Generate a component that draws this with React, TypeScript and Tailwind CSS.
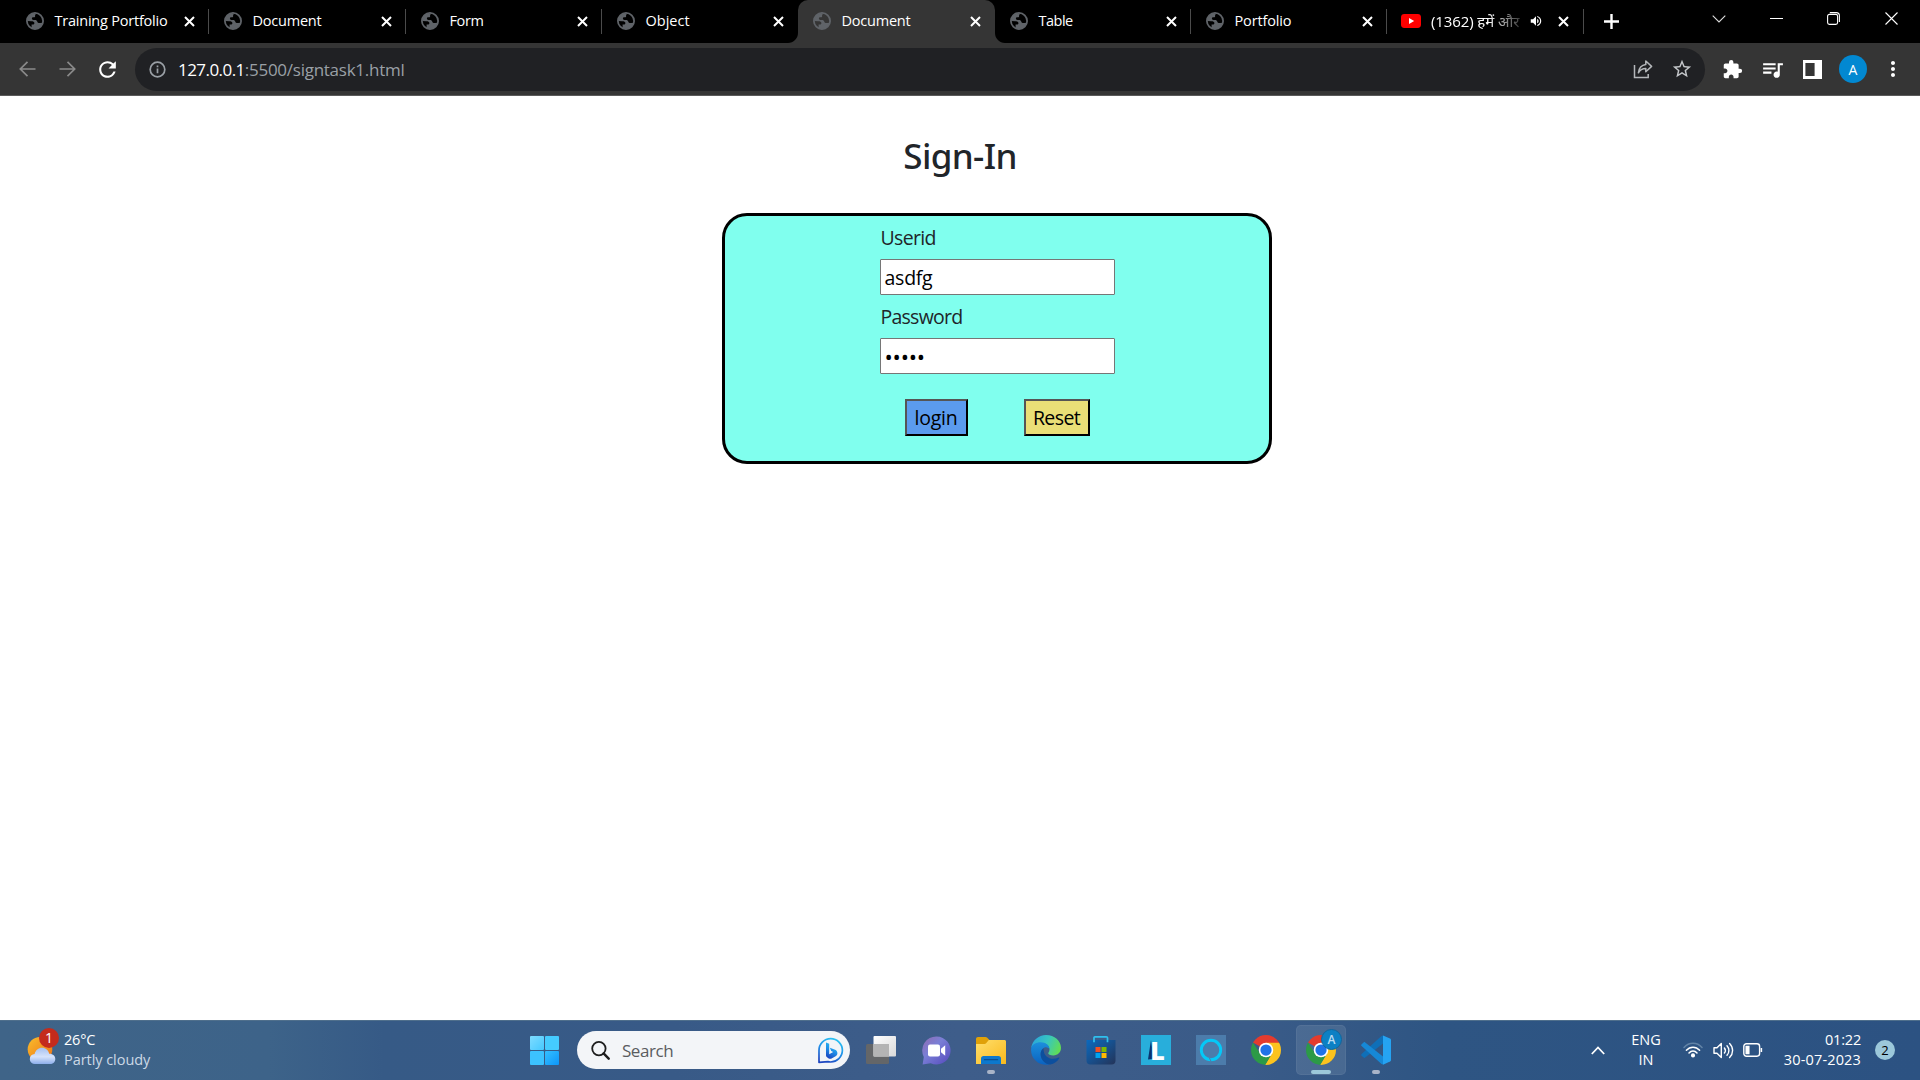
import type { ReactNode } from 'react';
import { MdExtension, MdQueueMusic, MdStarBorder, MdMoreVert, MdRefresh, MdVolumeUp } from 'react-icons/md';

type Tab = { title: string; tracking: string; width: string; active?: boolean; divider?: boolean };

const tabs: Tab[] = [
  { title: 'Training Portfolio', tracking: 'tracking-[-0.22px]', width: 'w-[198px]', divider: true },
  { title: 'Document', tracking: 'tracking-[-0.22px]', width: 'w-[197px]', divider: true },
  { title: 'Form', tracking: 'tracking-[-0.4px]', width: 'w-[196px]', divider: true },
  { title: 'Object', tracking: 'tracking-normal', width: 'w-[196px]' },
  { title: 'Document', tracking: 'tracking-[-0.22px]', width: 'w-[197px]', active: true },
  { title: 'Table', tracking: 'tracking-[-0.5px]', width: 'w-[196px]', divider: true },
  { title: 'Portfolio', tracking: 'tracking-[-0.15px]', width: 'w-[196px]', divider: true },
];

function Globe() {
  return (
    <svg className="size-[18px] shrink-0" viewBox="0 0 18 18">
      <circle cx="9" cy="9" r="8.1" fill="none" stroke="#5f6368" strokeWidth="1.8" />
      <path
        fill="#5f6368"
        d="M9.8 1.2C5 .9 1.2 4.4 1.2 9l4.2.2c1.700 0 2.900.5 3 1.800.1.900-.5 1.500-1.500 1.500H5.600v3.800c1 .5 2.200.7 3.400.7 3.900 0 7-2.600 7.800-6.200l-2.600.2c-1.700.2-2.600-.3-3-1.600-.3-1-1-1.500-2.200-1.500H7.400c-.9 0-1.500-.5-1.500-1.300s.6-1.300 1.500-1.300h.7c.7 0 1-.4 1-1V3.300c0-.6.2-.9.700-1.100z"
      />
    </svg>
  );
}

function Close() {
  return (
    <svg className="size-[11px] shrink-0" viewBox="0 0 11 11">
      <path d="M1 1l9 9M10 1l-9 9" stroke="#fff" strokeWidth="2" />
    </svg>
  );
}

function ActiveCurve({ flip }: { flip?: boolean }) {
  return (
    <svg className={flip ? 'absolute bottom-0 -right-[10px] size-[10px] -scale-x-100' : 'absolute bottom-0 -left-[10px] size-[10px]'} viewBox="0 0 10 10">
      <path d="M10 0v10H0C5.5 10 10 5.5 10 0z" fill="#353535" />
    </svg>
  );
}

function TabStrip() {
  return (
    <div className="flex h-[43px] bg-black pl-[11px] text-[14.5px] leading-5 text-white">
      {tabs.map((t, i) => (
        <div
          key={i}
          className={`relative flex h-full shrink-0 items-center pb-px pl-[15px] pr-[14.5px] ${t.width} ${t.active ? 'rounded-t-[10px] bg-[#353535]' : ''}`}
        >
          {t.active && <ActiveCurve />}
          {t.active && <ActiveCurve flip />}
          <Globe />
          <span className={`ml-[10.5px] flex-1 whitespace-nowrap ${t.tracking}`}>{t.title}</span>
          <Close />
          {t.divider && <i className="absolute right-0 top-[9px] h-[25px] w-px bg-[#4b4b4b]" />}
        </div>
      ))}
      <div className="relative flex w-[197px] shrink-0 items-center pb-px pl-[14px] pr-[15px]">
        <svg className="h-[14px] w-[20px] shrink-0" viewBox="0 0 20 14">
          <rect width="20" height="14" rx="3.4" fill="#f00" />
          <path d="M8 4l5.2 3L8 10z" fill="#fff" />
        </svg>
        <span className="-mt-px ml-[10px] w-[91px] whitespace-nowrap text-[15px] tracking-[-0.1px] [mask-image:linear-gradient(90deg,#000_62%,transparent_108%)]">
          (1362) हमें और
        </span>
        <MdVolumeUp className="ml-[7px] size-[14px]" />
        <span className="flex-1" />
        <Close />
        <i className="absolute right-0 top-[9px] h-[25px] w-px bg-[#4b4b4b]" />
      </div>
      <svg className="ml-[20px] mt-[14px] size-[15px] shrink-0" viewBox="0 0 15 15">
        <path d="M7.5 0v15M0 7.5h15" stroke="#fff" strokeWidth="2.4" />
      </svg>
      <div className="ml-auto flex h-[37px] items-center pr-[22px]">
        <svg className="mr-[44px] h-[8px] w-[14px]" viewBox="0 0 14 8">
          <path d="M.7.7L7 7 13.3.7" fill="none" stroke="#ddd" strokeWidth="1.1" />
        </svg>
        <i className="mr-[44px] h-px w-[13px] bg-white" />
        <svg className="mr-[45px] size-[13px]" viewBox="0 0 13 13" fill="none" stroke="#fff" strokeWidth="1.1">
          <rect x=".6" y="2.4" width="10" height="10" rx="1.8" />
          <path d="M2.8.6h6.4c1.8 0 3.2 1.4 3.2 3.2V10" />
        </svg>
        <svg className="size-[13px]" viewBox="0 0 13 13">
          <path d="M.5.5l12 12M12.500.5l-12 12" stroke="#fff" strokeWidth="1.1" />
        </svg>
      </div>
    </div>
  );
}

function Toolbar() {
  return (
    <div className="flex h-[53px] items-center border-b border-[#5a5a5a] bg-[#353535] pl-[19px] pr-[15.5px]">
      <svg className="h-[16px] w-[17px]" viewBox="0 0 17 16" fill="none" stroke="#8a8a8a" strokeWidth="1.7">
        <path d="M16.5 8H1.500M8.500.8L1.300 8l7.200 7.200" />
      </svg>
      <svg className="ml-[23px] h-[16px] w-[17px]" viewBox="0 0 17 16" fill="none" stroke="#8a8a8a" strokeWidth="1.7">
        <path d="M.5 8h15M8.500.8L15.700 8l-7.200 7.200" />
      </svg>
      <MdRefresh className="ml-[19px] size-[25px] text-white" />
      <div className="ml-[15px] flex h-[43px] w-[1570px] items-center rounded-full bg-[#202124] pl-[14px] pr-[12px]">
        <svg className="size-[17px]" viewBox="0 0 17 17" fill="none" stroke="#9aa0a6" strokeWidth="1.7">
          <circle cx="8.5" cy="8.5" r="7.3" />
          <path d="M8.500 7.600v4.600M8.500 4.500v1.800" />
        </svg>
        <span className="ml-[12px] pt-px text-[17px] leading-6 tracking-[-0.55px] text-white">127.0.0.1</span>
        <span className="pt-px text-[17px] leading-6 tracking-[-0.26px] text-[#9aa0a6]">:5500/signtask1.html</span>
        <svg className="ml-auto h-[20px] w-[20px]" viewBox="0 0 20 20" fill="none" stroke="#b4b7ba" strokeWidth="1.5">
          <path d="M1.500 6v12.500h13.700V15" />
          <path d="M12.800 2l5.800 5.400-5.800 5.300V9.600c-3.600 0-5.900 1.300-7.400 4.200.5-4.400 3-7.700 7.400-8.300V2z" strokeLinejoin="round" />
        </svg>
        <MdStarBorder className="ml-[18px] size-[22px] text-[#c4c7ca]" />
      </div>
      <MdExtension className="ml-[17px] size-[21px] text-white" />
      <MdQueueMusic className="ml-[17px] size-[25px] text-white" />
      <svg className="ml-[18px] h-[19px] w-[19px]" viewBox="0 0 19 19">
        <path fillRule="evenodd" fill="#fff" d="M0 0h19v19H0zM2.400 3v13h9.200V3z" />
      </svg>
      <span className="ml-[17px] flex size-[28px] items-center justify-center rounded-full bg-[#0288d1] text-[14px] text-white">A</span>
      <MdMoreVert className="ml-auto size-[24px] text-white" />
    </div>
  );
}

function SignIn() {
  return (
    <main className="flex h-[924px] flex-col items-center bg-white pt-[39px] text-[#212529]">
      <h1 className="font-['Noto_Sans'] text-[35px] font-medium leading-[42px] tracking-[-0.65px]">Sign-In</h1>
      <form className="ml-[74px] mt-[36px] flex h-[251px] w-[550px] flex-col items-center rounded-[25px] border-[3px] border-black bg-[#80ffee] pt-[7px] text-[19.5px] leading-[30px]">
        <div className="w-[235px]">
          <p className="pl-px tracking-[-0.65px]">Userid</p>
          <div className="mt-[6px] h-9 rounded-[1px] border border-[#767676] bg-white pl-[4px] leading-[36px] tracking-[-0.25px] text-black">asdfg</div>
          <p className="mt-[7px] pl-px tracking-[-0.75px]">Password</p>
          <div className="mt-[6px] h-9 rounded-[1px] border border-[#767676] bg-white pl-[4px] text-[22px] leading-[35px] tracking-[-0.2px] text-black">•••••</div>
          <div className="mt-[25px] flex pl-[25px] leading-[34px] text-black">
            <div className="h-[37px] w-[63px] border-2 border-b-black border-l-[#555] border-r-black border-t-[#555] bg-[#5b9bee] text-center tracking-[-0.2px]">login</div>
            <div className="ml-[56px] h-[37px] w-[66px] border-2 border-b-black border-l-[#555] border-r-black border-t-[#555] bg-[#eadf77] text-center tracking-[-0.6px]">Reset</div>
          </div>
        </div>
      </form>
    </main>
  );
}

function Chrome({ id }: { id: string }) {
  return (
    <svg className="size-[30px]" viewBox="0 0 48 48">
      <defs>
        <clipPath id={id}><circle cx="24" cy="24" r="24" /></clipPath>
      </defs>
      <g clipPath={`url(#${id})`}>
        <path d="M24 24L3.200 12V0H48v13H24z" fill="#e33b2e" />
        <path d="M24 12.500h24V48H22.500L33.500 29.500z" fill="#fcc31e" />
        <path d="M3.200 12L0 8v40h22.500l11-18.500L24 24 14.500 29.500z" fill="#2c9a47" />
      </g>
      <circle cx="24" cy="24" r="11.600" fill="#fff" />
      <circle cx="24" cy="24" r="9" fill="#1f73e8" />
    </svg>
  );
}

function Slot({ children, mark, active }: { children: ReactNode; mark?: boolean; active?: boolean }) {
  return (
    <div className={`relative mx-[2.5px] flex size-[50px] items-center justify-center rounded-[5px] ${active ? 'bg-white/10 ring-1 ring-inset ring-white/5' : ''}`}>
      {children}
      {mark && <i className="absolute bottom-[1px] left-[21px] h-[4px] w-[8px] rounded-full bg-[#a9b4c8]" />}
      {active && <i className="absolute bottom-[1px] left-[15px] h-[4px] w-[20px] rounded-full bg-[#9cc8da]" />}
    </div>
  );
}

function Taskbar() {
  return (
    <footer className="flex h-[60px] items-center border-t border-[#4f6f8c] bg-[linear-gradient(90deg,#3f6488_0%,#3d6389_14%,#365a86_20%,#385a87_35%,#3e5d8a_50%,#3a5b88_65%,#2e5583_75%,#2c5282_100%)] pb-px text-[14.5px] leading-5 text-white">
      <div className="flex w-[530px] items-center pl-[27px]">
        <div className="relative">
          <svg className="h-[29px] w-[29px]" viewBox="0 0 29 29">
            <defs>
              <linearGradient id="sun" x1="0" y1="0" x2="1" y2="1"><stop stopColor="#f9bd2c" /><stop offset="1" stopColor="#ee7014" /></linearGradient>
              <linearGradient id="cloud" x1="0" y1="0" x2="0" y2="1"><stop stopColor="#a6c1f0" /><stop offset=".55" stopColor="#d6e3fb" /><stop offset="1" stopColor="#8daeea" /></linearGradient>
            </defs>
            <circle cx="13" cy="13.3" r="12.3" fill="url(#sun)" />
            <path d="M8 28a5 5 0 0 1-.4-10c1-3.800 3.800-6.200 7.400-6.200 3.600 0 6.400 2.400 7.200 5.900C26 17.600 28.300 20 28.300 22.900 28.300 25.800 26 28 23 28z" fill="url(#cloud)" />
          </svg>
          <span className="absolute -top-[8px] left-[12px] flex size-[20px] items-center justify-center rounded-full bg-[#c42b1c] text-[14px]">1</span>
        </div>
        <div className="-mt-px ml-[8px]">
          <div className="tracking-[-0.2px]">26°C</div>
          <div className="tracking-[-0.05px] text-[#ccd9e6]">Partly cloudy</div>
        </div>
      </div>
      <svg className="size-[29px]" viewBox="0 0 29 29">
        <defs>
          <linearGradient id="win" x1="0" y1="0" x2="1" y2="1"><stop stopColor="#7fdcff" /><stop offset="1" stopColor="#45c8ff" /></linearGradient>
          <linearGradient id="win2" x1="0" y1="0" x2="1" y2="1"><stop stopColor="#35bfff" /><stop offset="1" stopColor="#0c96fa" /></linearGradient>
        </defs>
        <rect width="14" height="14" rx="1" fill="url(#win)" />
        <rect x="15" width="14" height="14" rx="1" fill="#45cbff" />
        <rect y="15" width="14" height="14" rx="1" fill="#3cc2ff" />
        <rect x="15" y="15" width="14" height="14" rx="1" fill="url(#win2)" />
      </svg>
      <div className="ml-[18px] flex h-[38px] w-[273px] items-center rounded-full bg-[#f3f5f8] pl-[14px] pr-[6px]">
        <svg className="size-[19px]" viewBox="0 0 19 19" fill="none" stroke="#1d1d1d" strokeWidth="1.8">
          <circle cx="7.900" cy="7.600" r="6.700" />
          <path d="M12.600 12.400l5.100 5.300" strokeWidth="2.400" strokeLinecap="round" />
        </svg>
        <span className="ml-[12px] pt-px text-[17px] tracking-[-0.45px] text-[#5a5c60]">Search</span>
        <svg className="ml-auto size-[27px]" viewBox="0 0 27 27">
          <defs>
            <linearGradient id="bing" x1=".7" y1="0" x2=".3" y2="1"><stop stopColor="#2bc3f2" /><stop offset=".5" stopColor="#1f8fe8" /><stop offset="1" stopColor="#1c45c0" /></linearGradient>
          </defs>
          <path d="M2 25.400V13.500A11.700 11.700 0 1 1 13.500 25l-2.500-.3z" fill="none" stroke="url(#bing)" strokeWidth="1.700" strokeLinejoin="round" />
          <path d="M9 5.500l3.200 1.300v10.500l4-2.200-2-1-1.300-3.400 5.200 2c1.600.6 2.300 2 2.300 3.500 0 1.300-.7 2.300-1.800 3l-4 2.200c-.9.500-2 .500-2.900 0L10 20.300c-.6-.4-1-1-1-1.800z" fill="url(#bing)" />
        </svg>
      </div>
      <div className="ml-[3.5px] flex items-center">
        <Slot>
          <svg className="h-[28px] w-[30px]" viewBox="0 0 30 28">
            <defs><linearGradient id="tv" x1="0" y1="0" x2="1" y2="1"><stop stopColor="#fff" /><stop offset="1" stopColor="#d9d9d9" /></linearGradient></defs>
            <rect y="8" width="23" height="20" rx="1.500" fill="#646668" />
            <rect x="7.500" y="0" width="22.500" height="20.500" rx="1" fill="url(#tv)" />
            <path d="M7.500 8H23v12.500H7.500z" fill="#b4b4b4" />
          </svg>
        </Slot>
        <Slot>
          <svg className="size-[29px]" viewBox="0 0 29 29">
            <defs><linearGradient id="chat" x1="0" y1="0" x2="1" y2="1"><stop stopColor="#8f6bb0" /><stop offset=".4" stopColor="#7a7fd6" /><stop offset="1" stopColor="#5448bd" /></linearGradient></defs>
            <path d="M14.700.500a14 14 0 1 1-6 26.700L.600 28.500l1.200-7.500A14 14 0 0 1 14.700.500z" fill="url(#chat)" />
            <rect x="6" y="8.500" width="12" height="12" rx="2" fill="#fff" />
            <path d="M19 12.800l4.200-3.600v10.600L19 16.200z" fill="#fff" />
          </svg>
        </Slot>
        <Slot mark>
          <svg className="h-[27px] w-[30px]" viewBox="0 0 30 27">
            <defs><linearGradient id="fold" x1="0" y1="0" x2="1" y2="1"><stop stopColor="#ffdf6c" /><stop offset="1" stopColor="#f9b91d" /></linearGradient></defs>
            <path d="M0 2C0 .9.900 0 2 0h7.500c.6 0 1.100.200 1.500.600L13.500 3H28v8H0z" fill="#e0a108" />
            <path d="M0 7h8.500c.6 0 1-.2 1.400-.5L12.800 3H28.500c.8 0 1.500.700 1.500 1.500V27H0z" fill="url(#fold)" />
            <path d="M5 27v-5.500C5 20 6 19 7.500 19h15c1.500 0 2.500 1 2.500 2.500V27z" fill="#0d78cd" />
            <path d="M8.500 22.700h13" stroke="#0a4f93" strokeWidth="1.300" strokeLinecap="round" />
          </svg>
        </Slot>
        <Slot>
          <svg className="size-[30px]" viewBox="0 0 30 30">
            <defs>
              <linearGradient id="eTop" x1="0" y1=".3" x2="1" y2=".6"><stop stopColor="#2aa4dc" /><stop offset=".5" stopColor="#37c6c0" /><stop offset="1" stopColor="#62dd52" /></linearGradient>
              <linearGradient id="eSide" x1="0" y1="0" x2="0" y2="1"><stop stopColor="#1c8fdc" /><stop offset="1" stopColor="#0b62c0" /></linearGradient>
            </defs>
            <path d="M.2 13C1.200 5.500 7.500 0 15 0c8.600 0 15 6 15 12.800 0 4.600-3.400 7.600-7.500 7.600-3.500 0-5.300-1.200-5.300-2.100 0-.7 1.300-1.300 1.300-3.800C18.500 10.800 15 8 10.600 8 5.800 8 1.800 10 .2 13z" fill="url(#eTop)" />
            <path d="M.1 14C.4 9.700 4.800 7.300 9.800 7.300c5 0 8.700 3.200 8.700 6.700-1.200-1.500-3-2.200-4.500-1.700-2.600.9-4.400 3.600-4.400 6.700 0 5.400 4.200 9.400 9 10.500C8.500 31.500-.5 24 .1 14z" fill="url(#eSide)" />
            <path d="M12.600 13.200c-1.900 1.300-3 3.400-3 6 0 5.800 5.200 10.300 9.600 10.200 4-.6 7.300-3 9.100-6.200.3-.6-.3-1-.8-.7-6.300 3.200-15.600.4-14.900-9.300z" fill="#0c4f9e" />
          </svg>
        </Slot>
        <Slot>
          <svg className="size-[30px]" viewBox="0 0 30 30">
            <defs><linearGradient id="store" x1="0" y1="0" x2="1" y2="1"><stop stopColor="#0b6abf" /><stop offset="1" stopColor="#243459" /></linearGradient></defs>
            <path d="M8 7V2.800C8 2 8.600 1.800 9.200 1.800h11c.6 0 1.300.200 1.300 1V7" fill="none" stroke="#2fc0ee" strokeWidth="1.700" />
            <path d="M.5 5h29v20.500a4 4 0 0 1-4 4h-21a4 4 0 0 1-4-4z" fill="url(#store)" />
            <path d="M9.500 12h5v5h-5z" fill="#f25022" /><path d="M15.500 12h5v5h-5z" fill="#7fba00" />
            <path d="M9.500 18h5v5h-5z" fill="#00a4ef" /><path d="M15.500 18h5v5h-5z" fill="#ffb900" />
            <path d="M8 7.200V5M21.500 7.200V5" stroke="#2fc0ee" strokeWidth="1.700" />
          </svg>
        </Slot>
        <Slot>
          <div className="relative flex size-[30px] items-center justify-center bg-[#28aedb]">
            <svg className="absolute left-[6px] top-[3px] h-[22px] w-[18px]" viewBox="0 0 18 22"><path d="M4 2L1 21.500l12-1.500-7-3z" fill="#0a3470" /></svg>
            <span className="relative ml-[3px] text-[25px] font-extrabold leading-[26px]">L</span>
          </div>
        </Slot>
        <Slot>
          <div className="flex size-[30px] items-center justify-center bg-[#4c7cab]">
            <svg className="size-[24px]" viewBox="0 0 24 24">
              <circle cx="12" cy="12" r="9.700" fill="none" stroke="#05c8f7" strokeWidth="2.900" />
              <path d="M10.400 20l1.800 3.700" stroke="#4c7cab" strokeWidth="1" />
            </svg>
          </div>
        </Slot>
        <Slot><Chrome id="chromeA" /></Slot>
        <Slot active>
          <Chrome id="chromeB" />
          <span className="absolute left-[25px] top-[4px] flex size-[21px] items-center justify-center rounded-full border border-[#11669c] bg-[#0c80c4] text-[12px] font-semibold text-[#b9dcf2]">A</span>
        </Slot>
        <Slot mark>
          <svg className="size-[30px]" viewBox="0 0 30 30">
            <path d="M22 .400L29 3.500c.6.300 1 .800 1 1.500v20c0 .7-.4 1.200-1 1.500l-7 3.200z" fill="#25a3f2" />
            <path d="M22 .400v8L4.200 22.600c-.5.4-1.100.4-1.600 0L.6 20.800c-.6-.5-.6-1.400 0-1.900L20.500.900z" fill="#0f6fb8" />
            <path d="M22 29.600v-8L4.200 7.400c-.5-.4-1.100-.4-1.600 0L.6 9.200c-.6.500-.6 1.400 0 1.900l19.900 18z" fill="#1688d6" />
          </svg>
        </Slot>
      </div>
      <div className="ml-auto flex items-center pr-[25px]">
        <svg className="h-[9px] w-[14px]" viewBox="0 0 14 9"><path d="M.8 8L7 1.500 13.200 8" fill="none" stroke="#fff" strokeWidth="1.800" /></svg>
        <div className="ml-[26px] w-[30px] text-center"><div>ENG</div><div>IN</div></div>
        <svg className="ml-[22px] h-[16px] w-[20px]" viewBox="0 0 20 16" fill="none" stroke="#fff" strokeWidth="1.500" strokeLinecap="round">
          <path d="M1 5.500c5-5.600 13-5.600 18 0" stroke="#6283a6" />
          <path d="M3.400 8.300c3.700-4.200 9.500-4.200 13.200 0M6 11c2.300-2.700 5.700-2.700 8 0" />
          <circle cx="10" cy="13.400" r="1.300" fill="#fff" />
        </svg>
        <svg className="ml-[10px] h-[17px] w-[21px]" viewBox="0 0 21 17" fill="none" stroke="#fff" strokeWidth="1.400" strokeLinecap="round" strokeLinejoin="round">
          <path d="M1 5.700h3L8.300 1.500v14L4 11.300H1z" />
          <path d="M11.400 6c1.200 1.500 1.200 3.500 0 5M14 3.800c2.500 2.800 2.500 6.600 0 9.400M16.600 1.500c4 4 4 10 0 14" />
        </svg>
        <svg className="ml-[9px] h-[14px] w-[20px]" viewBox="0 0 20 14" fill="none" stroke="#fff" strokeWidth="1.400">
          <rect x=".8" y=".8" width="15.800" height="12.400" rx="2.600" />
          <path d="M3.200 3.400h2.600v7.200H3.200zM18.400 5v4" fill="#fff" strokeWidth="1.500" />
        </svg>
        <div className="-mt-px ml-[20px] w-[78px] whitespace-nowrap text-right"><div className="tracking-[-0.2px]">01:22</div><div className="tracking-[0.15px]">30-07-2023</div></div>
        <span className="ml-[14px] flex size-[20px] items-center justify-center rounded-full bg-[#9cc8da] text-[13px] text-black">2</span>
      </div>
    </footer>
  );
}

export default function App() {
  return (
    <div className="flex h-[1080px] w-[1920px] flex-col overflow-hidden font-['Open_Sans','Noto_Sans',sans-serif]">
      <TabStrip />
      <Toolbar />
      <SignIn />
      <Taskbar />
    </div>
  );
}
